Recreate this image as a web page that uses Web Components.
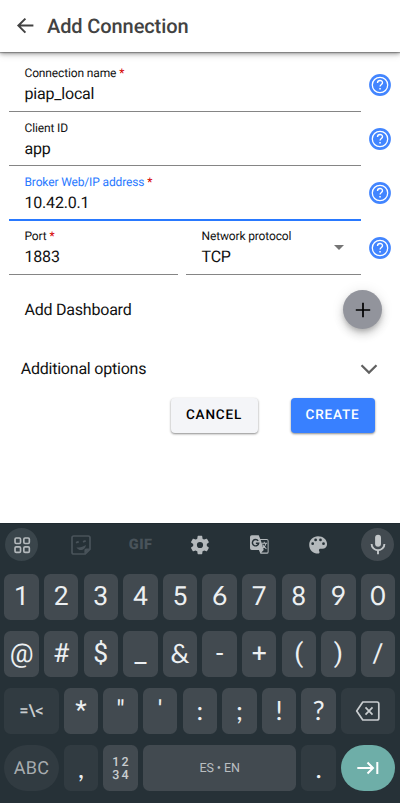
<!DOCTYPE html>
<html lang="en">
<head>
<meta charset="utf-8">
<title>Add Connection</title>
<style>
html,body{margin:0;height:803px;overflow:hidden;background:#fff;font-family:Roboto,sans-serif;text-rendering:geometricPrecision}
</style>
</head>
<body>
<connection-screen></connection-screen>
<script>
const define = (name, html, setup) => {
  const t = document.createElement('template');
  t.innerHTML = html;
  customElements.define(name, class extends HTMLElement {
    connectedCallback() {
      if (this.shadowRoot) return;
      this.attachShadow({mode: 'open'}).append(t.content.cloneNode(true));
      if (setup) setup(this, this.shadowRoot);
    }
  });
};

define('app-bar', `<style>
:host{display:flex;align-items:center;box-sizing:border-box;height:52px;padding-left:14px;background:#fff;color:#424242;box-shadow:0 1px 1px rgba(0,0,0,.28),0 2px 4px rgba(0,0,0,.3),0 3px 8px rgba(0,0,0,.1)}
svg{width:24px;height:24px;margin-right:9px;fill:none;stroke:#424242;stroke-width:2}
h1{margin:0;font-size:20px;font-weight:500;line-height:24px;letter-spacing:-.1px;white-space:nowrap}
</style>
<svg viewBox="0 0 24 24"><path d="M19.4 11.6H4.4M11.4 4.6l-7 7 7 7"/></svg><h1><slot></slot></h1>`);

define('text-field', `<style>
:host{display:block;box-sizing:border-box;height:51px;padding:4px 0 0 15.5px;border-bottom:1px solid #858585;color:#111;position:relative}
:host([focused]){border-bottom:2px solid #2979ff;height:51.5px}
.label{font-size:12px;line-height:16px;letter-spacing:-.14px;white-space:nowrap}
:host([focused]) .label{color:#2979ff}
i{display:none;font-style:normal;color:#d50000}
:host([required]) i{display:inline}
.value{font-size:16px;line-height:21px;margin-top:2px;letter-spacing:-.2px}
:host([focused]),:host([low]){padding-top:4.6px}
.arrow{display:none;position:absolute;right:17px;top:21.5px;border:5px solid transparent;border-top-color:#757575;border-bottom:0}
:host([select]) .arrow{display:block}
</style>
<div class="label"><span></span> <i>*</i></div><div class="value"><slot></slot></div><div class="arrow"></div>`,
(el, r) => { r.querySelector('span').textContent = el.getAttribute('label'); });

define('help-button', `<style>:host{display:block;width:22px;height:22px}svg{display:block}</style>
<svg width="22" height="22" viewBox="0 0 22 22"><circle cx="11" cy="11" r="10.9" fill="#4285ff"/><circle cx="11" cy="11" r="7.7" fill="none" stroke="#fff" stroke-width="1.3"/><path d="M8.5 9.1c0-3.5 5-3.3 5-.4 0 1.7-2.4 1.8-2.4 3.8" fill="none" stroke="#fff" stroke-width="1.35"/><path d="M10.3 13.9h1.5v1.5h-1.5z" fill="#fff"/></svg>`);

define('form-row', `<style>
:host{display:grid;grid-template-columns:352px 22px;column-gap:8.4px;height:54.3px}
.fields{display:grid;grid-auto-flow:column;grid-auto-columns:auto;align-items:start}
:host([split]) .fields{grid-template-columns:169px 175px;column-gap:8px}
help-button{margin-top:13px}
</style><div class="fields"><slot></slot></div><help-button></help-button>`);

define('action-button', `<style>
:host{display:flex;align-items:center;justify-content:center;box-sizing:border-box;height:35.5px;border-radius:4px;background:#f4f5f8;color:#000;font-size:13.5px;font-weight:500;letter-spacing:.84px;box-shadow:0 1px 2px rgba(0,0,0,.32),0 1px 3px rgba(0,0,0,.18)}
:host([primary]){background:#3880ff;color:#fff}
</style><slot></slot>`);

define('round-add', `<style>
:host{display:flex;align-items:center;justify-content:center;width:39px;height:39px;border-radius:50%;background:#92949c;box-shadow:0 3px 5px -1px rgba(0,0,0,.2),0 6px 10px rgba(0,0,0,.14),0 1px 14px rgba(0,0,0,.09)}
</style><svg width="16" height="16" viewBox="0 0 16 16"><path d="M8 .8v14.4M.8 8h14.4" stroke="#000" stroke-width="1.7"/></svg>`);

define('key-cap', `<style>
:host{display:flex;align-items:center;justify-content:center;box-sizing:border-box;height:46px;border-radius:6.5px;background:#424a50;color:#eceff1;font:400 26.5px/30px Roboto,sans-serif;white-space:pre}
:host([round]){font-family:Lato,sans-serif;padding-bottom:3px}
:host([dark]){background:#313b41}
:host([pill]){border-radius:23px}
:host([accent]){background:#6eaea8}
svg{display:block}
</style><slot></slot>`);

const icons = {
 grid:`<g fill="none" stroke="#b4b9bc" stroke-width="1.8"><rect x="4.4" y="4.4" width="6" height="6" rx="1.3"/><rect x="14" y="4.4" width="6" height="6" rx="1.3"/><rect x="4.4" y="14" width="6" height="6" rx="1.3"/><rect x="14" y="14" width="6" height="6" rx="1.3"/></g>`,
 sticker:`<g fill="none" stroke="#49535a" stroke-width="1.7"><path d="M4.8 3h14.4q1.8 0 1.8 1.8v11.4L16.2 21H4.8Q3 21 3 19.2V4.8Q3 3 4.8 3z"/></g><path d="M6.6 8.9l2.7-1.1.8 1.7-2.7 1.1zM13.6 8l2.7-1.1.8 1.7-2.7 1.1zM7.5 14.2c3 .7 6.2-.1 9.3-2.2-.3 6-7.5 6.5-9.3 2.2zM15.4 21v-3.8q0-1.8 1.8-1.8H21z" fill="#49535a"/>`,
 gear:`<path fill="#b4b9bc" fill-rule="evenodd" d="M19.4 13c.1-.7.1-1.3 0-2l2.1-1.6c.2-.2.3-.4.1-.7l-2-3.4c-.1-.2-.4-.3-.6-.2l-2.5 1c-.5-.4-1.1-.7-1.7-1l-.4-2.6c0-.3-.2-.5-.5-.5h-4c-.2 0-.4.2-.5.5l-.4 2.6c-.6.3-1.2.6-1.7 1l-2.5-1c-.2-.1-.5 0-.6.2l-2 3.4c-.1.3-.1.5.1.7L4.6 11a8 8 0 0 0 0 2l-2.3 1.6c-.2.2-.2.4-.1.7l2 3.4c.1.2.4.3.6.2l2.5-1c.5.4 1.1.7 1.7 1l.4 2.6c.1.3.3.5.5.5h4c.3 0 .5-.2.5-.5l.4-2.6c.6-.3 1.2-.6 1.7-1l2.5 1c.2.1.5 0 .6-.2l2-3.4c.2-.3.1-.5-.1-.7zM12 15.4a3.4 3.4 0 1 1 0-6.8 3.4 3.4 0 0 1 0 6.8z"/>`,
 translate:`<path fill="#b4b9bc" d="M4 2.3h7.2l1.6 4H19.5q2 0 2 2v11.4q0 2-2 2H13l-1.6-3.9H4q-1.9 0-1.9-1.9V4.2Q2.1 2.3 4 2.3z"/><path fill="#263137" d="M13.3 7.4h6.4q.8 0 .8.8v11.3q0 .9-.8.9H13.9l2.5-2.6z"/><path d="M10.6 8.2A3.3 3.3 0 1 0 11.2 10.6H8.2" fill="none" stroke="#263137" stroke-width="1.5"/><path d="M14 10.7h6M17 9.2v1.5M18.9 10.7c-.5 2.5-1.9 4-3.8 5.4M15.2 12.1c1 2 2.3 3.3 4 4.5" fill="none" stroke="#b4b9bc" stroke-width="1.1"/>`,
 palette:`<path fill="#b4b9bc" fill-rule="evenodd" d="M12 2.5c-5.4 0-9.6 4.1-9.6 9.4s4.3 9.5 9.6 9.5c1 0 1.7-.7 1.7-1.6 0-.9-.7-1.3-.7-2.2 0-.9.7-1.5 1.7-1.5h2c3.1 0 5.2-2.2 5.2-5.2C21.9 6.2 17.5 2.5 12 2.5zM6.2 12a1.5 1.5 0 1 1 0-3 1.5 1.5 0 0 1 0 3zM9.4 8a1.5 1.5 0 1 1 0-3 1.5 1.5 0 0 1 0 3zM14.7 8a1.5 1.5 0 1 1 0-3 1.5 1.5 0 0 1 0 3zM18 12a1.5 1.5 0 1 1 0-3 1.5 1.5 0 0 1 0 3z"/>`,
 mic:`<rect x="9.1" y="1.8" width="5.9" height="11.9" rx="2.95" fill="#c3c7c9"/><path d="M5.6 10.9a6.4 6.4 0 0 0 12.8 0M12 17.3V21.2" fill="none" stroke="#c3c7c9" stroke-width="1.9"/>`
};
define('tool-icon', `<style>
:host{display:flex;align-items:center;justify-content:center;width:33px;height:33px;border-radius:50%;color:#49535a;font:900 14.5px/20px Roboto,sans-serif;letter-spacing:.4px}
:host([disc]){background:#3a454b}
:host([bright]){background:#424a50}
.art{display:flex}
</style><div class="art"><slot></slot></div>`, (el, r) => {
  const n = el.getAttribute('icon'), s = el.getAttribute('size') || 22;
  if (icons[n]) r.querySelector('.art').innerHTML = `<svg width="${s}" height="${s}" viewBox="0 0 24 24">${icons[n]}</svg>`;
});

const keys = list => list.map(c => `<key-cap${/^([069:;!?]|&amp;)$/.test(c) ? ' round' : ''}>${c}</key-cap>`).join('');

define('soft-keyboard', `<style>
:host{display:block;box-sizing:border-box;height:280px;background:#263137;border-top:1px solid #1f2a30;padding:4.2px 4.3px 0}
.tools{display:grid;grid-template-columns:repeat(7,33px);justify-content:space-between;height:33px;margin:0 1.5px 12.7px 1.2px}
.row{display:grid;grid-template-columns:repeat(10,34.5px);column-gap:5.12px;margin-bottom:11.2px}
.wide{grid-template-columns:54.3px repeat(7,34.5px) 54.3px}
.last{grid-template-columns:54.3px 34.5px 34.5px 153.36px 34.5px 54.3px}
.sym{font-size:16.5px;font-weight:500;color:#c9cdcf;letter-spacing:-.1px;padding-top:1px}
.abc{font-size:18px;font-weight:400;color:#a8adb0;letter-spacing:.2px;padding-top:2px}
.num{font-size:12.5px;line-height:12.5px;font-weight:500;letter-spacing:2.2px;color:#c9cdcf;padding:3px 0 0 2px}
.space{font-size:12.5px;font-weight:400;color:#b9bec1;letter-spacing:-.1px;padding-top:2px}
.low{padding-bottom:1px}
</style>
<div class="tools"><tool-icon icon="grid" disc></tool-icon><tool-icon icon="sticker" size="24"></tool-icon><tool-icon>GIF</tool-icon><tool-icon icon="gear"></tool-icon><tool-icon icon="translate" size="23"></tool-icon><tool-icon icon="palette"></tool-icon><tool-icon icon="mic" disc bright size="24"></tool-icon></div>
<div class="row">${keys([...'1234567890'])}</div>
<div class="row">${keys(['@','#','$','_','&amp;','-','+','(',')','/'])}</div>
<div class="row wide"><key-cap dark class="sym">=\\&lt;</key-cap>${keys(['*','"',"'",':',';','!','?'])}<key-cap dark><svg width="26" height="22" viewBox="0 0 26 22"><g fill="none" stroke="#c9cdcf" stroke-width="1.7"><path d="M7.8 2H22q1.8 0 1.8 1.8v14.4q0 1.8-1.8 1.8H7.8L1.7 11z" stroke-linejoin="round"/><path d="M10.5 7.3l7 7.4M17.5 7.3l-7 7.4"/></g></svg></key-cap></div>
<div class="row last"><key-cap dark pill class="abc">ABC</key-cap><key-cap dark class="low" round>,</key-cap><key-cap class="num">12
34</key-cap><key-cap class="space">ES • EN</key-cap><key-cap dark class="low" round>.</key-cap><key-cap accent pill><svg width="24" height="16" viewBox="0 0 24 16"><path d="M1.3 8h15.6M11.5 2.5L17 8l-5.5 5.5M21.3 2v12" fill="none" stroke="#fff" stroke-width="2"/></svg></key-cap></div>`);

define('connection-screen', `<style>
:host{display:flex;flex-direction:column;width:400px;height:803px;background:#fff;color:#111}
form{display:block;margin:0;padding:8.8px 0 0 9px}
.dash,.more{display:flex;align-items:center;justify-content:space-between;font-size:16px}
.dash{height:39px;margin-top:12.5px;padding:0 18px 0 15.5px;letter-spacing:-.22px}
.more{height:30px;margin-top:24.5px;padding:0 22px 0 11.7px;letter-spacing:-.22px}
.actions{display:grid;grid-template-columns:87px 84px;column-gap:33px;margin:13.6px 0 0 161.5px}
soft-keyboard{margin-top:auto}
</style>
<app-bar>Add Connection</app-bar>
<form>
<form-row><text-field label="Connection name" required>piap_local</text-field></form-row>
<form-row><text-field label="Client ID" low>app</text-field></form-row>
<form-row><text-field label="Broker Web/IP address" required focused>10.42.0.1</text-field></form-row>
<form-row split><text-field label="Port" required low>1883</text-field><text-field label="Network protocol" select low>TCP</text-field></form-row>
<div class="dash"><span>Add Dashboard</span><round-add></round-add></div>
<div class="more"><span>Additional options</span><svg width="18" height="12" viewBox="0 0 18 12"><path d="M1.5 2.2L9 9.6l7.5-7.4" fill="none" stroke="#616161" stroke-width="2.2"/></svg></div>
<div class="actions"><action-button>CANCEL</action-button><action-button primary>CREATE</action-button></div>
</form>
<soft-keyboard></soft-keyboard>`);
</script>
</body>
</html>
